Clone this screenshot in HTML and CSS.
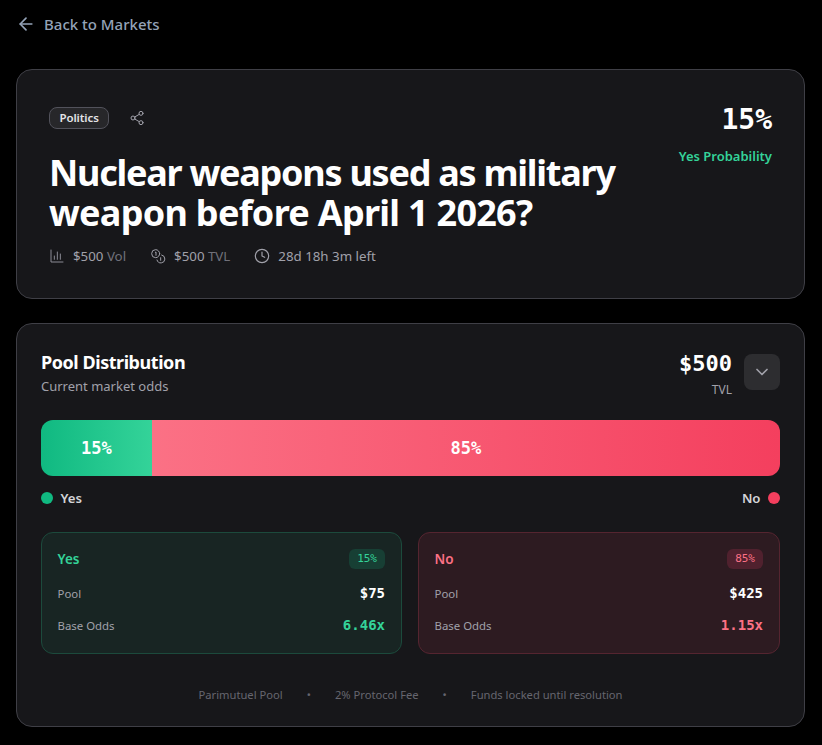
FILE: index.html
```html
<!DOCTYPE html>
<html lang="en">
  <head>
    <meta charset="UTF-8" />
    <meta name="viewport" content="width=device-width, initial-scale=1.0" />
    <title>Market Detail</title>
    <link rel="stylesheet" href="styles.css">
  </head>
  <body>
    <div class="container">
      <a class="back-link" href="#">
        <svg class="icon-back" viewBox="0 0 24 24" fill="none" stroke="currentColor" stroke-width="2" stroke-linecap="round" stroke-linejoin="round"><path d="M19 12H5"/><path d="M12 19l-7-7 7-7"/></svg>
        <span>Back to Markets</span>
      </a>

      <section class="card market-card">
        <div class="market-main">
          <div class="tag-row">
            <span class="tag">Politics</span>
            <svg class="icon-share" viewBox="0 0 24 24" fill="none" stroke="currentColor" stroke-width="1.5" stroke-linecap="round" stroke-linejoin="round"><circle cx="18" cy="5" r="3"/><circle cx="6" cy="12" r="3"/><circle cx="18" cy="19" r="3"/><path d="M8.6 13.5l6.8 4"/><path d="M15.4 6.5l-6.8 4"/></svg>
          </div>
          <h1>Nuclear weapons used as military weapon before April 1 2026?</h1>
          <div class="meta-row">
            <div class="meta-item">
              <svg class="icon-meta" viewBox="0 0 24 24" fill="none" stroke="currentColor" stroke-width="1.5" stroke-linecap="round"><path d="M3 3v18h18"/><path d="M8 17v-5"/><path d="M12.5 17V6"/><path d="M17 17v-8"/></svg>
              <span>$500 <em>Vol</em></span>
            </div>
            <div class="meta-item">
              <svg class="icon-meta icon-bright" viewBox="0 0 24 24" fill="none" stroke="currentColor" stroke-width="1.5" stroke-linecap="round"><circle cx="8.5" cy="8.5" r="6"/><path d="M8 6.5l1-.5v5"/><path d="M17.5 10.5a6 6 0 1 1-7 7.5"/><path d="M16 14.5v4"/></svg>
              <span>$500 <em>TVL</em></span>
            </div>
            <div class="meta-item">
              <svg class="icon-meta icon-bright" viewBox="0 0 24 24" fill="none" stroke="currentColor" stroke-width="1.75" stroke-linecap="round" stroke-linejoin="round"><circle cx="12" cy="12" r="10"/><path d="M12 6v6l4 2"/></svg>
              <span>28d 18h 3m left</span>
            </div>
          </div>
        </div>
        <div class="market-prob">
          <div class="prob-value">15%</div>
          <div class="prob-label">Yes Probability</div>
        </div>
      </section>

      <section class="card pool-card">
        <div class="pool-header">
          <div>
            <h2>Pool Distribution</h2>
            <div class="pool-sub">Current market odds</div>
          </div>
          <div class="pool-tvl">
            <div>
              <div class="tvl-value">$500</div>
              <div class="tvl-label">TVL</div>
            </div>
            <button class="toggle">
              <svg viewBox="0 0 24 24" fill="none" stroke="currentColor" stroke-width="2" stroke-linecap="round" stroke-linejoin="round"><path d="M6 9l6 6 6-6"/></svg>
            </button>
          </div>
        </div>

        <div class="pool-bar">
          <div class="bar-yes" style="width: 15%">15%</div>
          <div class="bar-no" style="width: 85%">85%</div>
        </div>

        <div class="legend">
          <div class="legend-item"><span class="dot dot-yes"></span>Yes</div>
          <div class="legend-item">No<span class="dot dot-no"></span></div>
        </div>

        <div class="outcomes">
          <div class="outcome outcome-yes">
            <div class="outcome-head">
              <span class="outcome-name">Yes</span>
              <span class="outcome-pct">15%</span>
            </div>
            <div class="outcome-row"><span>Pool</span><strong>$75</strong></div>
            <div class="outcome-row"><span>Base Odds</span><strong class="odds">6.46x</strong></div>
          </div>
          <div class="outcome outcome-no">
            <div class="outcome-head">
              <span class="outcome-name">No</span>
              <span class="outcome-pct">85%</span>
            </div>
            <div class="outcome-row"><span>Pool</span><strong>$425</strong></div>
            <div class="outcome-row"><span>Base Odds</span><strong class="odds">1.15x</strong></div>
          </div>
        </div>

        <div class="pool-footer">
          <span>Parimutuel Pool</span>
          <span class="sep">•</span>
          <span>2% Protocol Fee</span>
          <span class="sep">•</span>
          <span>Funds locked until resolution</span>
        </div>
      </section>
    </div>
  </body>
</html>
```

FILE: styles.css
```css
* {
  margin: 0;
  padding: 0;
  box-sizing: border-box;
}

body {
  font-family: "Noto Sans", "Open Sans", sans-serif;
  background: #000;
  color: #fff;
  overflow: hidden;
}

.container {
  padding: 14px 17px 16px 16px;
}

.back-link {
  display: flex;
  align-items: center;
  gap: 8px;
  height: 20px;
  margin-bottom: 35px;
  color: #94a3b8;
  font-size: 15px;
  font-weight: 500;
  text-decoration: none;
}

.icon-back {
  width: 20px;
  height: 20px;
  color: #94a3b8;
}

.card {
  background: #17171a;
  border: 1px solid #3f3f46;
  border-radius: 16px;
}

.market-card {
  display: flex;
  justify-content: space-between;
  align-items: flex-start;
  height: 230px;
  padding: 32px;
  margin-bottom: 24px;
}

.market-main {
  width: 590px;
}

.tag-row {
  display: flex;
  align-items: center;
  gap: 20px;
  height: 32px;
  margin-bottom: 19px;
}

.tag {
  padding: 3px 9.5px;
  border: 1px solid #52525b;
  border-radius: 8px;
  background: #27272a;
  color: #e4e4e7;
  font-size: 11.5px;
  font-weight: 600;
  line-height: 14px;
  letter-spacing: -0.1px;
}

.icon-share {
  width: 16px;
  height: 16px;
  color: #a1a1aa;
}

h1 {
  font-size: 36px;
  font-weight: 700;
  line-height: 40px;
  letter-spacing: -0.72px;
  margin-bottom: 13px;
}

h1::first-line {
  letter-spacing: -1.25px;
}

.meta-row {
  display: flex;
  align-items: center;
  gap: 24px;
  color: #a1a1aa;
  font-size: 13.3px;
  line-height: 20px;
}

.meta-item {
  display: flex;
  align-items: center;
  gap: 8px;
}

.meta-item em {
  font-style: normal;
  color: #71717a;
}

.icon-meta {
  width: 16px;
  height: 16px;
  color: #8b8b94;
}

.icon-bright {
  color: #a1a1aa;
}

.market-prob {
  text-align: right;
}

.prob-value {
  font-family: "DejaVu Sans Mono", monospace;
  font-size: 28px;
  font-weight: 700;
  line-height: 36px;
  margin-bottom: 8px;
}

.prob-label {
  color: #34d399;
  font-size: 13px;
  font-weight: 600;
  line-height: 20px;
}

.pool-card {
  height: 404px;
  padding: 26px 24px 24px;
}

.pool-header {
  display: flex;
  justify-content: space-between;
  align-items: flex-start;
  height: 70px;
}

h2 {
  font-size: 18px;
  font-weight: 700;
  line-height: 24px;
  letter-spacing: -0.45px;
}

.pool-sub {
  margin-top: 2px;
  color: #a1a1aa;
  font-size: 13px;
  line-height: 20px;
}

.pool-tvl {
  display: flex;
  align-items: flex-start;
  gap: 12px;
  text-align: right;
}

.tvl-value {
  font-family: "DejaVu Sans Mono", monospace;
  font-size: 22px;
  font-weight: 700;
  line-height: 28px;
}

.tvl-label {
  margin-top: 4px;
  color: #a1a1aa;
  font-size: 12px;
  line-height: 16px;
}

.toggle {
  display: flex;
  align-items: center;
  justify-content: center;
  width: 36px;
  height: 36px;
  margin-top: 4px;
  border: none;
  border-radius: 8px;
  background: #2d2d30;
  color: #a1a1aa;
}

.toggle svg {
  width: 20px;
  height: 20px;
}

.pool-bar {
  display: flex;
  height: 56px;
  border-radius: 12px;
  overflow: hidden;
}

.bar-yes,
.bar-no {
  display: flex;
  align-items: center;
  justify-content: center;
  font-family: "DejaVu Sans Mono", monospace;
  font-size: 17px;
  font-weight: 700;
}

.bar-yes {
  background: linear-gradient(90deg, #10b981, #34d399);
}

.bar-no {
  background: linear-gradient(90deg, #fb7185, #f43f5e);
}

.legend {
  display: flex;
  justify-content: space-between;
  margin-top: 14px;
  margin-bottom: 26px;
}

.legend-item {
  display: flex;
  align-items: center;
  gap: 7.5px;
  color: #d4d4d8;
  font-size: 13.2px;
  font-weight: 600;
  line-height: 16px;
}

.dot {
  width: 12px;
  height: 12px;
  border-radius: 50%;
}

.dot-yes {
  background: #10b981;
}

.dot-no {
  background: #f43f5e;
}

.outcomes {
  display: grid;
  grid-template-columns: 361px 362px;
  gap: 16px;
}

.outcome {
  height: 122px;
  padding: 16px 16px 16px 15.5px;
  border: 1px solid;
  border-radius: 12px;
}

.outcome-yes {
  background: #182523;
  border-color: #1c4a3c;
}

.outcome-no {
  background: #2d1b21;
  border-color: #552530;
}

.outcome-head {
  display: flex;
  justify-content: space-between;
  align-items: center;
  height: 20px;
  margin-bottom: 14px;
}

.outcome-name {
  font-size: 13.5px;
  font-weight: 600;
}

.outcome-yes .outcome-name,
.outcome-yes .outcome-pct {
  color: #34d399;
}

.outcome-no .outcome-name,
.outcome-no .outcome-pct {
  color: #fb7185;
}

.outcome-pct {
  padding: 2px 8px;
  border-radius: 6px;
  font-family: "DejaVu Sans Mono", monospace;
  font-size: 11px;
  line-height: 16px;
}

.outcome-yes .outcome-pct {
  background: #173f34;
}

.outcome-no .outcome-pct {
  background: #50212e;
}

.outcome-row {
  display: flex;
  justify-content: space-between;
  align-items: center;
  height: 20px;
  margin-bottom: 12px;
  color: #a1a1aa;
  font-size: 11.4px;
}

.outcome-row strong {
  color: #fff;
  font-family: "DejaVu Sans Mono", monospace;
  font-size: 14px;
  font-weight: 700;
}

.outcome-yes .outcome-row strong.odds {
  color: #34d399;
}

.outcome-no .outcome-row strong.odds {
  color: #fb7185;
}

.pool-footer {
  display: flex;
  justify-content: center;
  gap: 24px;
  margin-top: 33px;
  color: #66666f;
  font-size: 11.2px;
  line-height: 16px;
}
```
